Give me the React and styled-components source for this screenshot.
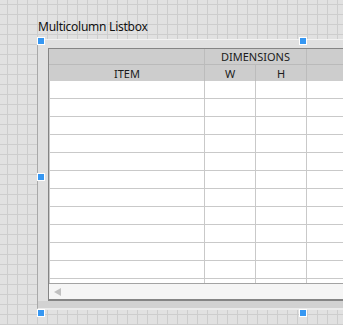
import React from "react";
import styled, { createGlobalStyle } from "styled-components";

const GlobalStyle = createGlobalStyle`
  html, body { margin:0; padding:0; }
  body { font-family:"Noto Sans", "Open Sans", sans-serif; }
`;

const Canvas = styled.div`
  width:343px;
  height:325px;
  overflow:hidden;
  box-sizing:border-box;
  padding:18px 0 0 37px;
  background-color:#e1e1e1;
  background-image:
    linear-gradient(to right, #cdcdcd 1px, transparent 1px),
    linear-gradient(to bottom, #cdcdcd 1px, transparent 1px);
  background-size:10px 10px;
  background-position:7px 4px;
`;

const Label = styled.div`
  font-size:12px;
  line-height:17px;
  height:21px;
  margin-left:1px;
  letter-spacing:-0.25px;
  color:#111;
  white-space:nowrap;
`;

const Frame = styled.div`
  position:relative;
  width:540px;
  box-sizing:border-box;
  padding:8px 0 7px 10px;
  background:#e0e0e0;
  border-left:1px solid #a9a9a9;
  border-top:1px solid #f2f2f2;
  border-bottom:2px solid #ebebeb;
  box-shadow:inset 0 -7px 0 #d2d2d2;
`;

const Handle = styled.span`
  position:absolute;
  width:6px;
  height:6px;
  background:#3697f2;
  border:1px solid #fff;
  left:${p => p.$x}px;
  top:${p => p.$y}px;
`;

const Table = styled.div`
  border:1px solid #858585;
  border-bottom-width:2px;
  border-right:none;
  background:#fff;
`;

const HeaderRow = styled.div`
  display:grid;
  grid-template-columns:${p => p.$cols};
  height:16px;
  padding-left:1px;
  background:#cdcdcd;
  border-bottom:${p => (p.$divided ? "1px solid #bababa" : "none")};
  box-sizing:border-box;
  font-size:11px;
  color:#1b1b1b;
`;

const HeaderCell = styled.div`
  border-right:1px solid #bcbcbc;
  display:flex;
  align-items:center;
  justify-content:center;
  line-height:15px;
  &:last-child { border-right:none; }
`;

const Body = styled.div`
  height:202px;
  overflow:hidden;
`;

const Row = styled.div`
  display:grid;
  grid-template-columns:155px 51px 51px 1fr;
  height:18px;
  box-sizing:border-box;
  border-left:1px solid #c9c9c9;
  border-bottom:1px solid #c9c9c9;
`;

const Cell = styled.div`
  border-right:1px solid #c9c9c9;
  &:last-child { border-right:none; }
`;

const ScrollBar = styled.div`
  height:15px;
  border-top:1px solid #a3a3a3;
  background:#f5f5f5;
  display:flex;
  align-items:center;
  padding-left:5px;
`;

const cols = "155px 51px 51px 1fr";
const rows = Array.from({ length: 12 });

export default function App() {
  return (
    <>
      <GlobalStyle />
      <Canvas>
        <Label>Multicolumn Listbox</Label>
        <Frame>
          <Table>
            <HeaderRow $cols="155px 102px 1fr" $divided>
              <HeaderCell />
              <HeaderCell>DIMENSIONS</HeaderCell>
              <HeaderCell />
            </HeaderRow>
            <HeaderRow $cols={cols}>
              <HeaderCell>ITEM</HeaderCell>
              <HeaderCell>W</HeaderCell>
              <HeaderCell>H</HeaderCell>
              <HeaderCell />
            </HeaderRow>
            <Body>
              {rows.map((_, i) => (
                <Row key={i}>
                  <Cell />
                  <Cell />
                  <Cell />
                  <Cell />
                </Row>
              ))}
            </Body>
            <ScrollBar>
              <svg width="8" height="8" viewBox="0 0 8 8">
                <polygon points="0,4 7,0 7,8" fill="#c0c0c0" />
              </svg>
            </ScrollBar>
          </Table>
          <Handle $x={-1} $y={-3} />
          <Handle $x={-1} $y={133} />
          <Handle $x={-1} $y={269} />
          <Handle $x={261} $y={-3} />
          <Handle $x={261} $y={269} />
        </Frame>
      </Canvas>
    </>
  );
}
